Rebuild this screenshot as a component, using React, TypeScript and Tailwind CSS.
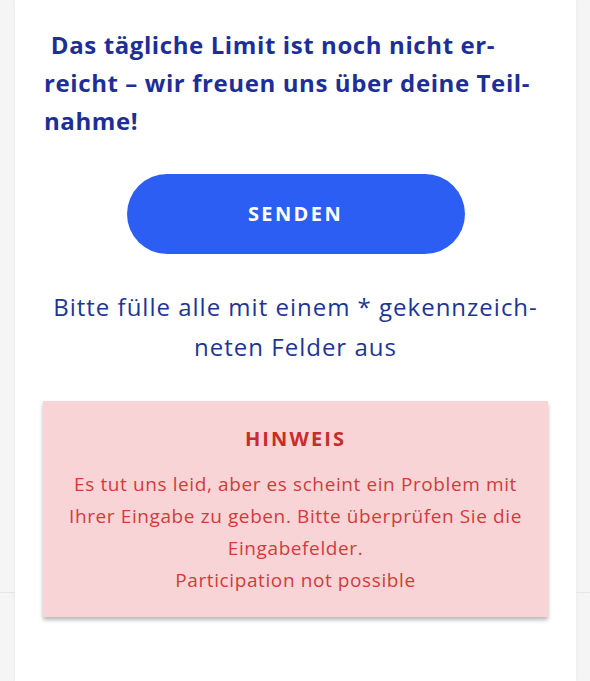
export default function App() {
  return (
    <div className="flex min-h-[681px] w-full bg-[#f5f5f6]" style={{ fontFamily: '"Open Sans", "Liberation Sans", sans-serif' }}>
      {/* left gutter */}
      <div className="w-[15px] shrink-0">
        <div className="h-[593px] border-b border-[#e6e6e8]" />
      </div>

      {/* card */}
      <div className="flex-1 bg-white pb-10 shadow-[0_0_5px_rgba(0,0,0,0.06)]">
        <h2 className="mt-[26px] pl-[29px] text-[24px] font-bold leading-[38px] tracking-[0.6px] text-[#1d2f97]">
          &nbsp;Das tägliche Limit ist noch nicht er-
          <br />
          reicht – wir freuen uns über deine Teil-
          <br />
          nahme!
        </h2>

        <div className="mt-[34px] flex justify-center">
          <button className="h-[80px] w-[338px] rounded-full bg-[#2c5ef4] text-[20px] font-bold tracking-[2.4px] text-white">
            SENDEN
          </button>
        </div>

        <p className="mt-[33px] text-center text-[24px] leading-[40px] tracking-[1px] text-[#1e3594]">
          Bitte fülle alle mit einem * gekennzeich-
          <br />
          neten Felder aus
        </p>

        <div className="mx-[28px] mt-[34px] bg-[#f8d4d6] px-4 pt-[24px] pb-[21px] text-center shadow-[0_3px_4px_rgba(0,0,0,0.28)]">
          <h3 className="text-[20px] font-bold leading-[28px] tracking-[2.1px] text-[#c92c2c]">HINWEIS</h3>
          <p className="mt-[15px] text-[19px] leading-[32px] tracking-[0.6px] text-[#d23b3b]">
            Es tut uns leid, aber es scheint ein Problem mit
            <br />
            Ihrer Eingabe zu geben. Bitte überprüfen Sie die
            <br />
            Eingabefelder.
            <br />
            Participation not possible
          </p>
        </div>
      </div>

      {/* right gutter */}
      <div className="w-[14px] shrink-0">
        <div className="h-[593px] border-b border-[#e6e6e8]" />
      </div>
    </div>
  );
}
